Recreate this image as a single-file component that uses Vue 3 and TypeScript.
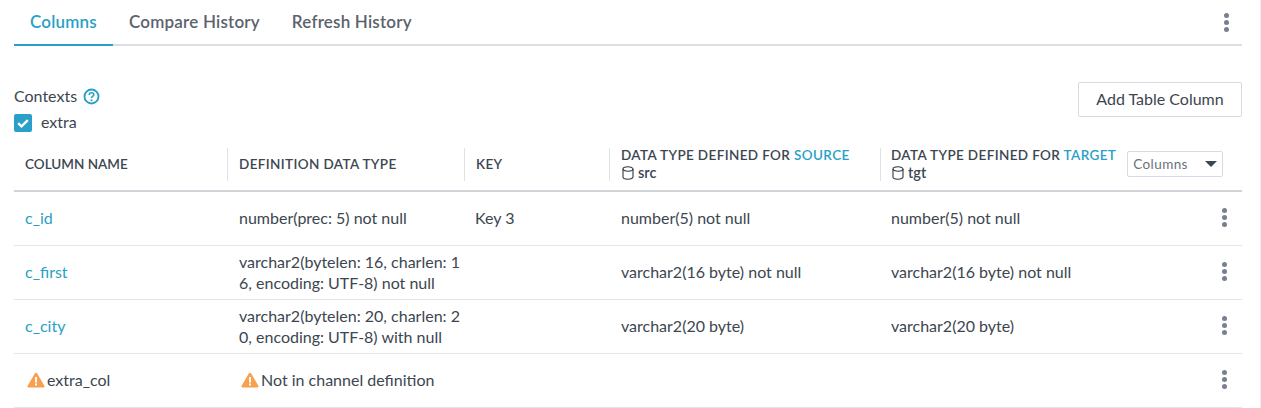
<script setup lang="ts">
interface Row { name: string; warn?: boolean; def: string; def2?: string; key?: string; src?: string; tgt?: string }
const rows: Row[] = [
  { name: 'c_id', def: 'number(prec: 5) not null', key: 'Key 3', src: 'number(5) not null', tgt: 'number(5) not null' },
  { name: 'c_first', def: 'varchar2(bytelen: 16, charlen: 1', def2: '6, encoding: UTF-8) not null', src: 'varchar2(16 byte) not null', tgt: 'varchar2(16 byte) not null' },
  { name: 'c_city', def: 'varchar2(bytelen: 20, charlen: 2', def2: '0, encoding: UTF-8) with null', src: 'varchar2(20 byte)', tgt: 'varchar2(20 byte)' },
  { name: 'extra_col', warn: true, def: 'Not in channel definition' },
]
</script>

<template>
  <div class="page">
    <div class="main">
      <div class="tabs">
        <div class="tab active">Columns</div>
        <div class="tab">Compare History</div>
        <div class="tab">Refresh History</div>
        <div class="kebab top"><i></i><i></i><i></i></div>
      </div>

      <div class="toolbar">
        <div>
          <div class="contexts">
            <span>Contexts</span>
            <svg width="17" height="17" viewBox="0 0 17 17" fill="none">
              <circle cx="8.500" cy="8.500" r="7" stroke="#2a9fc7" stroke-width="1.900" />
              <path d="M6.200 6.900c0-1.400 1.100-2.200 2.300-2.200s2.300.8 2.300 2c0 1.700-2.300 1.700-2.300 3.300" stroke="#2a9fc7" stroke-width="1.600" />
              <circle cx="8.500" cy="12.200" r="1.050" fill="#2a9fc7" />
            </svg>
          </div>
          <label class="check">
            <span class="box">
              <svg width="18" height="18" viewBox="0 0 18 18" fill="none">
                <path d="M4.200 9.200l3.300 3.200 6.300-6.300" stroke="#fff" stroke-width="2.400" />
              </svg>
            </span>
            <span class="check-label">extra</span>
          </label>
        </div>
        <button class="add">Add Table Column</button>
      </div>

      <div class="grid head">
        <div class="th"><div class="cell-head narrow">COLUMN NAME</div></div>
        <div class="th sep"><div class="cell-head">DEFINITION DATA TYPE</div></div>
        <div class="th sep"><div class="cell-head">KEY</div></div>
        <div class="th sep">
          <div>
            <div class="cell-head">DATA TYPE DEFINED FOR <span class="link">SOURCE</span></div>
            <div class="db">
              <svg width="12" height="14" viewBox="0 0 12 14" fill="none">
                <ellipse cx="6" cy="3" rx="5" ry="2.200" stroke="#2f3943" stroke-width="1.100" />
                <path d="M1 3v8c0 1.300 2.200 2.200 5 2.200s5-.9 5-2.200V3" stroke="#2f3943" stroke-width="1.100" />
              </svg>
              src
            </div>
          </div>
        </div>
        <div class="th sep last">
          <div>
            <div class="cell-head">DATA TYPE DEFINED FOR <span class="link">TARGET</span></div>
            <div class="db">
              <svg width="12" height="14" viewBox="0 0 12 14" fill="none">
                <ellipse cx="6" cy="3" rx="5" ry="2.200" stroke="#2f3943" stroke-width="1.100" />
                <path d="M1 3v8c0 1.300 2.200 2.200 5 2.200s5-.9 5-2.200V3" stroke="#2f3943" stroke-width="1.100" />
              </svg>
              tgt
            </div>
          </div>
          <div class="select">
            <span>Columns</span>
            <i class="caret"></i>
          </div>
        </div>
      </div>

      <div v-for="r in rows" :key="r.name" class="grid row">
        <div class="td name">
          <svg v-if="r.warn" class="warn" width="18" height="16" viewBox="0 0 18 16">
            <path d="M9 .8c.5 0 .9.3 1.200.7l7.200 12.200c.5.9-.1 1.900-1.100 1.900H1.700c-1 0-1.600-1-1.100-1.900L7.800 1.500C8.100 1.100 8.500.8 9 .8z" fill="#f7a150" />
            <rect x="8" y="5" width="2" height="5.500" fill="#fff" />
            <rect x="8" y="11.500" width="2" height="2" fill="#fff" />
          </svg>
          <span :class="r.warn ? 'plain' : 'link'">{{ r.name }}</span>
        </div>
        <div class="td def" :class="{ warned: r.warn }">
          <svg v-if="r.warn" class="warn" width="18" height="16" viewBox="0 0 18 16">
            <path d="M9 .8c.5 0 .9.3 1.200.7l7.200 12.200c.5.9-.1 1.900-1.100 1.900H1.700c-1 0-1.600-1-1.100-1.900L7.800 1.500C8.100 1.100 8.500.8 9 .8z" fill="#f7a150" />
            <rect x="8" y="5" width="2" height="5.500" fill="#fff" />
            <rect x="8" y="11.500" width="2" height="2" fill="#fff" />
          </svg>
          <div>
            <div>{{ r.def }}</div>
            <div v-if="r.def2">{{ r.def2 }}</div>
          </div>
        </div>
        <div class="td">{{ r.key }}</div>
        <div class="td src">{{ r.src }}</div>
        <div class="td">{{ r.tgt }}</div>
        <div class="kebab"><i></i><i></i><i></i></div>
      </div>
    </div>
  </div>
</template>

<style>
html, body { margin: 0; background: #fff; }
</style>

<style scoped>
.page {
  width: 1261px;
  height: 408px;
  overflow: hidden;
  box-sizing: border-box;
  padding: 0 19px 0 14px;
  font-family: Lato, "Noto Sans", sans-serif;
  font-size: 16px;
  color: #3c4650;
  border-right: 1px solid #eceef1;
}
.main { width: 1228px; }
.tabs {
  display: flex;
  align-items: flex-start;
  height: 46px;
  box-sizing: border-box;
  border-bottom: 2px solid #dcdee3;
  position: relative;
}
.tab {
  height: 46px;
  box-sizing: border-box;
  padding: 11px 16px 0;
  font-size: 17px;
  font-weight: 600;
  letter-spacing: 0.2px;
  line-height: 21px;
  color: #5b626c;
  white-space: nowrap;
}
.tab.active { color: #2a9fc7; border-bottom: 2px solid #2a9fc7; }
.kebab {
  display: flex;
  flex-direction: column;
  align-items: center;
  justify-content: center;
  gap: 2px;
  margin-left: auto;
}
.kebab i { width: 5px; height: 5px; border-radius: 50%; background: #78808f; }
.kebab.top { height: 44px; width: 24px; margin-right: 4px; }
.toolbar {
  display: flex;
  justify-content: space-between;
  align-items: flex-start;
  padding-top: 35px;
  height: 95px;
  box-sizing: border-box;
}
.contexts {
  display: flex;
  align-items: center;
  gap: 6px;
  line-height: 29px;
}
.contexts svg { margin-top: 1px; }
.check {
  display: flex;
  align-items: center;
  gap: 9px;
  margin-top: 3px;
  line-height: 20px;
}
.check-label { margin-top: -1px; }
.box {
  width: 18px;
  height: 18px;
  border-radius: 2px;
  background: #2a9fc7;
  display: block;
}
.box svg { display: block; }
.add {
  width: 164px;
  height: 35px;
  margin-top: 1px;
  background: #fff;
  border: 1px solid #d8dbe0;
  border-radius: 2px;
  font: inherit;
  color: #3c4650;
  padding: 0 0 2px;
}
.grid {
  display: grid;
  grid-template-columns: 213px 237px 145px 271px 1fr;
  width: 1228px;
}
.head {
  height: 41px;
  padding-bottom: 8px;
  border-bottom: 2px solid #d0d3d8;
}
.th {
  display: flex;
  align-items: center;
  padding: 0 0 2px 11px;
  height: 33px;
  margin-top: 7px;
  box-sizing: border-box;
}
.sep { border-left: 1px solid #e0e2e6; }
.last { justify-content: flex-start; gap: 11px; padding-left: 10px; }
.cell-head {
  font-size: 13.500px;
  font-weight: 600;
  letter-spacing: 0.37px;
  color: #3c4650;
  line-height: 18px;
  white-space: nowrap;
}
.narrow { letter-spacing: 0; }
.db {
  display: flex;
  align-items: center;
  gap: 4px;
  margin-left: 1px;
  font-size: 14.500px;
  font-weight: 600;
  line-height: 18px;
}
.select {
  flex: none;
  width: 96px;
  height: 26px;
  box-sizing: border-box;
  border: 1px solid #d8dbe0;
  border-radius: 2px;
  display: flex;
  align-items: center;
  justify-content: space-between;
  padding: 0 5px;
  font-size: 13.500px;
  letter-spacing: 0.4px;
  color: #6a717b;
}
.caret {
  width: 0;
  height: 0;
  border-left: 6px solid transparent;
  border-right: 6px solid transparent;
  border-top: 6px solid #3c4650;
}
.link { color: #2a9fc7; }
.plain { color: #3c4650; }
.row {
  height: 54px;
  box-sizing: border-box;
  border-bottom: 1.500px solid #e3e5e8;
  position: relative;
  align-items: center;
}
.td {
  padding: 0 0 2px 11px;
  line-height: 21px;
  white-space: nowrap;
}
.src { padding-left: 12px; }
.name { display: flex; align-items: center; gap: 2px; }
.name .warn { margin-left: 2px; }
.def { display: flex; align-items: center; gap: 2px; padding-left: 12px; }
.def.warned { padding-left: 14px; }
.warn { flex: none; }
.row .kebab { position: absolute; right: 6px; top: -1px; height: 52px; width: 24px; }
</style>
